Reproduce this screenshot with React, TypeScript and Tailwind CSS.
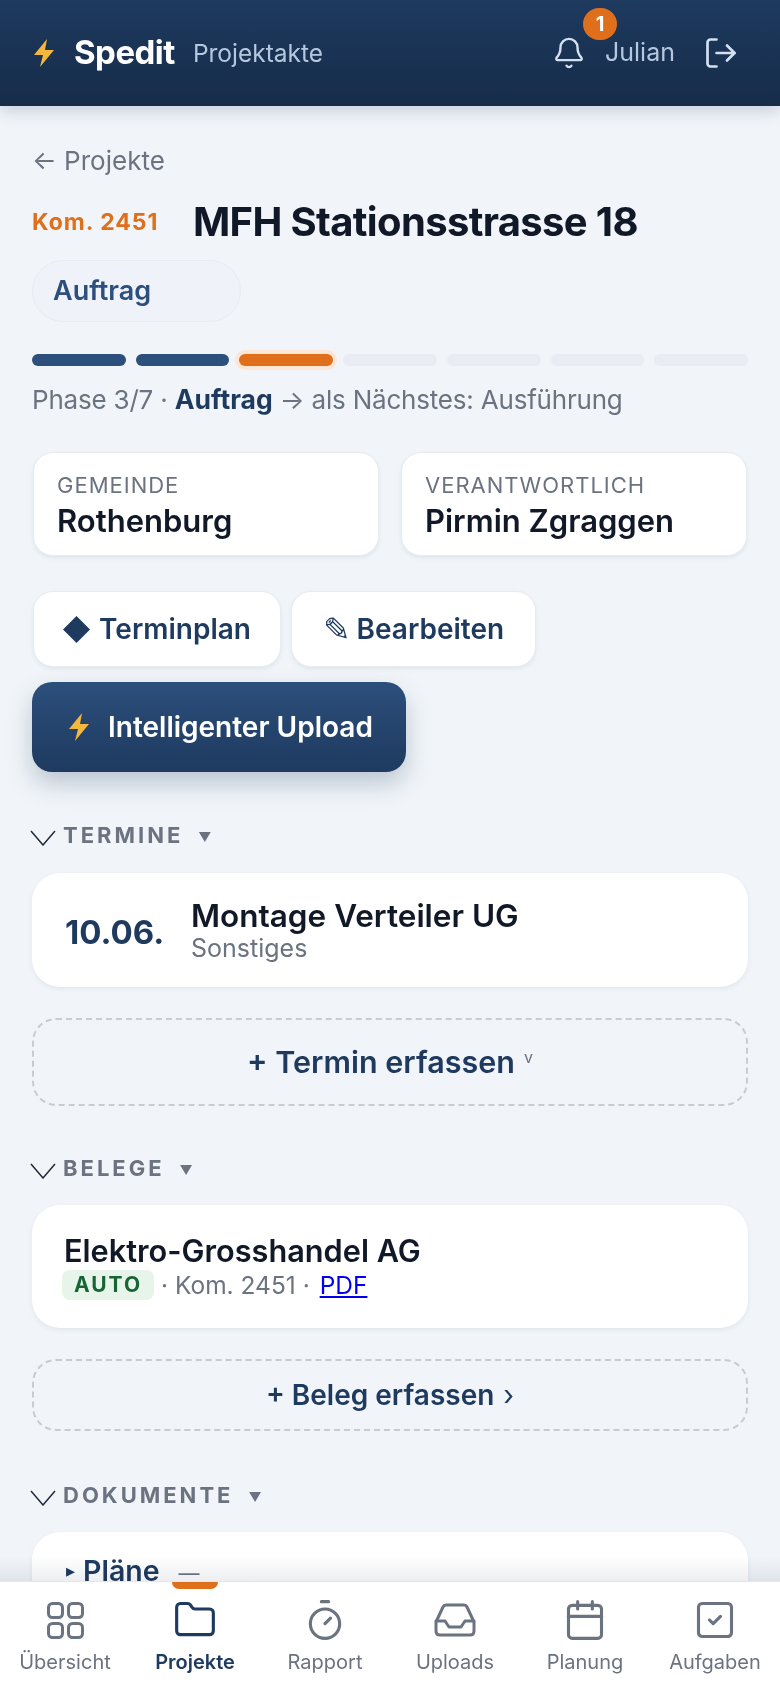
import { Bell, Folder, LogOut, Calendar, SquareCheck, Timer } from "lucide-react";
import type { ReactNode } from "react";

const PHASES = ["done", "done", "active", "todo", "todo", "todo", "todo"];

function Bolt({ className }: { className?: string }) {
  return (
    <svg viewBox="0 0 22 28" className={className}>
      <path d="M14 0 L1 16 H10 L7 28 L21 11 H12 Z" fill="#f5b83d" />
    </svg>
  );
}

function InboxTray({ className }: { className?: string }) {
  return (
    <svg viewBox="0 0 42 34" fill="none" stroke="currentColor" strokeWidth="3" strokeLinejoin="round" strokeLinecap="round" className={className}>
      <path d="M2 19 L9 4 Q10 2 12 2 H30 Q32 2 33 4 L40 19 V28 Q40 32 36 32 H6 Q2 32 2 28 Z" />
      <path d="M2 18 H11 L15 24 H27 L31 18 H40" />
    </svg>
  );
}

function GridIcon() {
  return (
    <svg viewBox="0 0 37 37" fill="none" stroke="currentColor" strokeWidth="3" className="w-[37px] h-[37px]">
      <rect x="1.5" y="1.5" width="14" height="14" rx="4" />
      <rect x="21.5" y="1.5" width="14" height="14" rx="4" />
      <rect x="1.5" y="21.5" width="14" height="14" rx="4" />
      <rect x="21.5" y="21.5" width="14" height="14" rx="4" />
    </svg>
  );
}

function SectionHead({ title }: { title: string }) {
  return (
    <div className="flex items-center h-[26px]">
      <svg viewBox="0 0 26 16" fill="none" stroke="#1f2937" strokeWidth="1.5" className="w-[26px] h-[16px] ml-[-2px] mt-[6px]">
        <path d="M1 1 L13 15 L25 1" />
      </svg>
      <span className="ml-[7px] text-[22px] font-bold tracking-[3px] text-[#6b7280] leading-none">{title}</span>
      <span className="ml-[15px] text-[13px] text-[#6b7280] leading-none mt-[4px]">▼</span>
    </div>
  );
}

function InfoCard({ label, value }: { label: string; value: string }) {
  return (
    <div className="flex-1 h-[104px] rounded-[20px] bg-white border border-[#e8ecf2] shadow-[0_2px_4px_rgba(30,58,95,0.08)] px-[23px] pt-[17px]">
      <div className="text-[22px] leading-[30px] tracking-[1px] text-[#6b7280]">{label}</div>
      <div className="text-[31px] leading-[42px] font-semibold text-[#111827]">{value}</div>
    </div>
  );
}

function GhostButton({ children, className }: { children: ReactNode; className: string }) {
  return (
    <button type="button" className={`flex items-center justify-center h-[76px] rounded-[20px] bg-white border border-[#e8ecf2] shadow-[0_2px_4px_rgba(30,58,95,0.08)] text-[28px] font-semibold text-[#1e3a5f] ${className}`}>
      {children}
    </button>
  );
}

function NavItem({ icon, label, active }: { icon: ReactNode; label: string; active?: boolean }) {
  return (
    <div className={`relative flex-1 flex flex-col items-center ${active ? "text-[#1e3a5f]" : "text-[#6b7280]"}`}>
      {active ? <div className="absolute top-0 left-[42px] w-[46px] h-[7px] rounded-b-[8px] bg-[#e06f1c]" /> : null}
      <div className="h-[40px] mt-[18px] flex items-center justify-center">{icon}</div>
      <div className={`mt-[9px] text-[20px] leading-[26px] ${active ? "font-semibold" : ""}`}>{label}</div>
    </div>
  );
}

export default function App() {
  return (
    <div className="relative flex flex-col h-[1688px] w-[780px] overflow-hidden bg-[#f1f5f9] font-['Inter',sans-serif]">
      <header className="relative z-10 flex items-center h-[106px] shrink-0 bg-gradient-to-b from-[#1e3a5f] to-[#162c49] shadow-[0_6px_14px_rgba(30,58,95,0.18)] pl-[33px] pr-[44px]">
        <Bolt className="w-[22px] h-[28px]" />
        <span className="ml-[19px] text-[33px] font-bold tracking-[-0.5px] text-white">Spedit</span>
        <span className="ml-[18px] text-[24.5px] text-[#b6c8e0]">Projektakte</span>
        <div className="relative ml-auto mr-[1px]">
          <Bell size={34} strokeWidth={1.7} className="text-[#d4e0f0]" />
          <div className="absolute top-[-28px] left-[31px] flex items-center justify-center w-[34px] h-[32px] rounded-full bg-[#e06f1c] text-white text-[20px] font-bold">1</div>
        </div>
        <span className="ml-[18px] text-[25px] text-[#b6c8e0]">Julian</span>
        <LogOut size={36} strokeWidth={1.8} className="ml-[28px] mr-[-3px] text-[#d4e0f0]" />
      </header>

      <main className="flex-1 min-h-0 overflow-hidden px-[32px] pt-[38px]">
        <div className="text-[26px] leading-[34px] text-[#6b7280]">← Projekte</div>

        <div className="flex items-center mt-[20px] h-[48px]">
          <span className="text-[23px] font-bold tracking-[1px] text-[#e06f1c] w-[161px]">Kom. 2451</span>
          <h1 className="text-[40px] font-bold tracking-[-0.65px] text-[#111827]">MFH Stationsstrasse 18</h1>
        </div>

        <div className="flex items-center w-[209px] h-[62px] mt-[14px] rounded-full bg-[#eff3f9] border border-[#e8ecf2] pl-[20px] text-[27px] font-semibold text-[#2c4f7c]">
          Auftrag
        </div>

        <div className="flex gap-[10px] mt-[32px] h-[12px]">
          {PHASES.map((phase, i) => (
            <div
              key={i}
              className={`flex-1 rounded-full ${
                phase === "done"
                  ? "bg-[#2c4f7c]"
                  : phase === "active"
                    ? "bg-[#e06f1c] shadow-[0_0_0_4px_#fde6d5]"
                    : "bg-[#e9edf3]"
              }`}
            />
          ))}
        </div>

        <div className="mt-[15px] text-[26px] leading-[36px] tracking-[-0.2px] text-[#6b7280]">
          Phase 3/7 · <b className="font-bold text-[26.5px] tracking-normal text-[#1e3a5f]">Auftrag</b> → als Nächstes: Ausführung
        </div>

        <div className="flex gap-[22px] mt-[34px] px-[1px]">
          <InfoCard label="GEMEINDE" value="Rothenburg" />
          <InfoCard label="VERANTWORTLICH" value="Pirmin Zgraggen" />
        </div>

        <div className="flex gap-[10px] mt-[35px] px-[1px]">
          <GhostButton className="w-[248px]">
            <svg viewBox="0 0 27 27" className="w-[27px] h-[27px] mr-[9px]">
              <polygon points="13.5,0 27,13.5 13.5,27 0,13.5" fill="#1e3a5f" />
            </svg>
            Terminplan
          </GhostButton>
          <GhostButton className="w-[245px]">
            <span className="font-['DejaVu_Sans',sans-serif] text-[33px] leading-none mr-[6px]">✎</span>Bearbeiten
          </GhostButton>
        </div>

        <button type="button" className="flex items-center w-[374px] h-[90px] mt-[15px] rounded-[20px] bg-gradient-to-b from-[#2c4f7c] to-[#1e3a5f] shadow-[0_12px_24px_rgba(30,58,95,0.25)] pl-[36px] text-[28px] font-semibold text-white">
          <Bolt className="w-[22px] h-[28px]" />
          <span className="ml-[18px]">Intelligenter Upload</span>
        </button>

        <div className="mt-[50px]">
          <SectionHead title="TERMINE" />
        </div>

        <div className="flex items-center h-[114px] mt-[25px] rounded-[28px] bg-white shadow-[0_2px_5px_rgba(30,58,95,0.08)] pl-[33px]">
          <span className="w-[126px] mt-[6px] text-[33px] font-bold text-[#1e3a5f]">10.06.</span>
          <div>
            <div className="text-[31.5px] leading-[36px] font-semibold text-[#111827]">Montage Verteiler UG</div>
            <div className="text-[25px] leading-[28px] text-[#6b7280]">Sonstiges</div>
          </div>
        </div>

        <button type="button" className="flex items-center justify-center w-full h-[88px] mt-[31px] rounded-[24px] border-2 border-dashed border-[#c7ccd4] text-[30.5px] font-semibold text-[#1e3a5f]">
          + Termin erfassen
          <span className="ml-[9px] mb-[10px] text-[16px] font-normal text-[#6b7280]">v</span>
        </button>

        <div className="mt-[49px]">
          <SectionHead title="BELEGE" />
        </div>

        <div className="h-[123px] mt-[24px] rounded-[28px] bg-white shadow-[0_2px_5px_rgba(30,58,95,0.08)] pl-[32px] pt-[27px]">
          <div className="text-[30.7px] leading-[38px] font-semibold text-[#111827]">Elektro-Grosshandel AG</div>
          <div className="flex items-center text-[24.5px] leading-[30px] text-[#6b7280]">
            <span className="flex items-center justify-center w-[92px] h-[30px] ml-[-2px] rounded-[8px] bg-[#e6f4ea] text-[21px] font-bold tracking-[2px] text-[#166534]">AUTO</span>
            <span className="ml-[7px]">· Kom. 2451 ·&nbsp;</span>
            <a href="#" className="ml-[3px] text-[#0000ee] underline">PDF</a>
          </div>
        </div>

        <button type="button" className="flex items-center justify-center w-full h-[72px] mt-[31px] rounded-[24px] border-2 border-dashed border-[#c7ccd4] text-[28px] font-semibold text-[#1e3a5f]">
          + Beleg erfassen
          <span className="ml-[9px] font-normal">›</span>
        </button>

        <div className="mt-[51px]">
          <SectionHead title="DOKUMENTE" />
        </div>

        <div className="h-[120px] mt-[24px] rounded-[28px] bg-white shadow-[0_2px_5px_rgba(30,58,95,0.08)] pl-[34px] pt-[17px]">
          <div className="flex items-center text-[28.5px] leading-[38px] font-semibold text-[#1e3a5f]">
            <span className="font-['DejaVu_Sans',sans-serif] text-[18px] mr-[8px]">▸</span>
            Pläne
            <span className="ml-[19px] mt-[6px] text-[21px] font-normal text-[#6b7280]">—</span>
          </div>
        </div>
      </main>

      <div className="absolute left-0 right-0 bottom-[107px] h-[24px] bg-gradient-to-b from-transparent to-[#e5e7eb]/70 mix-blend-multiply" />

      <nav className="relative z-10 flex h-[107px] shrink-0 bg-white border-t border-[#e5e7eb]">
        <NavItem icon={<GridIcon />} label="Übersicht" />
        <NavItem icon={<Folder size={44} strokeWidth={1.7} />} label="Projekte" active />
        <NavItem icon={<Timer size={44} strokeWidth={1.7} />} label="Rapport" />
        <NavItem icon={<InboxTray className="w-[42px] h-[34px]" />} label="Uploads" />
        <NavItem icon={<Calendar size={44} strokeWidth={1.7} />} label="Planung" />
        <NavItem icon={<SquareCheck size={44} strokeWidth={1.7} />} label="Aufgaben" />
      </nav>
    </div>
  );
}
